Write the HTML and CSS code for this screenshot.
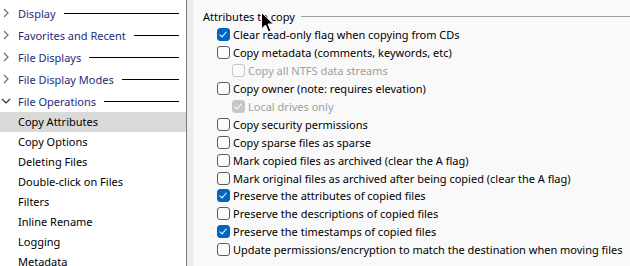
FILE: index.html
```html
<!DOCTYPE html>
<html lang="en">
<head>
  <meta charset="UTF-8">
  <title>Preferences - Copy Attributes</title>
  <link rel="stylesheet" href="styles.css">
</head>
<body>

  <!-- Left tree -->
  <div class="nav">
    <div class="head"><svg class="chev" width="10" height="10" viewBox="0 0 10 10"><path d="M3 1 L7 5 L3 9" /></svg><span class="label">Display</span><span class="rule"></span></div>
    <div class="head"><svg class="chev" width="10" height="10" viewBox="0 0 10 10"><path d="M3 1 L7 5 L3 9" /></svg><span class="label">Favorites and Recent</span><span class="rule"></span></div>
    <div class="head"><svg class="chev" width="10" height="10" viewBox="0 0 10 10"><path d="M3 1 L7 5 L3 9" /></svg><span class="label">File Displays</span><span class="rule"></span></div>
    <div class="head"><svg class="chev" width="10" height="10" viewBox="0 0 10 10"><path d="M3 1 L7 5 L3 9" /></svg><span class="label">File Display Modes</span><span class="rule"></span></div>
    <div class="head"><svg class="chev open" width="10" height="10" viewBox="0 0 10 10"><path d="M1 3 L5 7 L9 3" /></svg><span class="label">File Operations</span><span class="rule"></span></div>
    <div class="item selected">Copy Attributes</div>
    <div class="item">Copy Options</div>
    <div class="item">Deleting Files</div>
    <div class="item">Double-click on Files</div>
    <div class="item">Filters</div>
    <div class="item">Inline Rename</div>
    <div class="item">Logging</div>
    <div class="item">Metadata</div>
  </div>

  <div class="strip"></div>

  <!-- Page -->
  <div class="main">
    <div class="group-title"><span>Attributes to copy</span><span class="rule"></span></div>

    <div class="opts">
      <label class="opt"><span class="box checked"></span>Clear read-only flag when copying from CDs</label>
      <label class="opt"><span class="box"></span>Copy metadata (comments, keywords, etc)</label>
      <label class="opt sub disabled"><span class="box"></span>Copy all NTFS data streams</label>
      <label class="opt"><span class="box"></span>Copy owner (note: requires elevation)</label>
      <label class="opt sub disabled"><span class="box checked"></span>Local drives only</label>
      <label class="opt"><span class="box"></span>Copy security permissions</label>
      <label class="opt"><span class="box"></span>Copy sparse files as sparse</label>
      <label class="opt"><span class="box"></span>Mark copied files as archived (clear the A flag)</label>
      <label class="opt"><span class="box"></span>Mark original files as archived after being copied (clear the A flag)</label>
      <label class="opt"><span class="box checked"></span>Preserve the attributes of copied files</label>
      <label class="opt"><span class="box"></span>Preserve the descriptions of copied files</label>
      <label class="opt"><span class="box checked"></span>Preserve the timestamps of copied files</label>
      <label class="opt"><span class="box"></span>Update permissions/encryption to match the destination when moving files</label>
    </div>

    <!-- mouse pointer -->
    <svg class="cursor" width="14" height="22" viewBox="0 0 14 22">
      <path d="M0.5 0.5 L0.5 17 L4.5 13 L7.5 20 L10 19 L7 12 L12.5 12 Z" fill="#000" stroke="#fff" stroke-width="1"/>
    </svg>
  </div>

</body>
</html>
```

FILE: styles.css
```css
body {
  margin: 0;
  height: 266px;
  overflow: hidden;
  display: flex;
  font-family: "Noto Sans", sans-serif;
  font-size: 11px;
  color: #000;
  background: #f9f9f9;
}

.nav {
  width: 187px;
  flex-shrink: 0;
  background: #fff;
  border-right: 1px solid #7a7a7a;
  padding-top: 2px;
  box-sizing: border-box;
}

.head {
  height: 22px;
  display: flex;
  align-items: center;
  padding-right: 7px;
  color: #1f2a7c;
}

.chev {
  flex-shrink: 0;
  margin-left: 1px;
  margin-right: 7px;
}

.chev path {
  fill: none;
  stroke: #707070;
  stroke-width: 1.2;
}

.chev.open path {
  stroke: #303030;
}

.head .rule {
  flex: 1;
  height: 1px;
  background: #000;
  margin-left: 8px;
}

.item {
  height: 20px;
  line-height: 20px;
  padding-left: 18px;
}

.item.selected {
  background: #d9d9d9;
}

.strip {
  width: 6px;
  flex-shrink: 0;
  background: #ececec;
}

.main {
  flex: 1;
  position: relative;
  padding: 7px 0 0 10px;
}

.group-title {
  display: flex;
  align-items: center;
  height: 18px;
}

.group-title .rule {
  flex: 1;
  height: 1px;
  background: #a0a0a0;
  margin-left: 6px;
}

.opts {
  padding-left: 14px;
  padding-top: 1px;
}

.opt {
  display: flex;
  align-items: center;
  height: 17.9px;
  white-space: nowrap;
}

.opt.sub {
  padding-left: 15px;
}

.opt.disabled {
  color: #a0a0a0;
}

.box {
  width: 13px;
  height: 13px;
  box-sizing: border-box;
  border: 1px solid #5c5c5c;
  border-radius: 3px;
  background: #fbfbfb;
  margin-right: 3px;
  flex-shrink: 0;
  position: relative;
}

.box.checked {
  background: #0067c0;
  border-color: #0067c0;
}

.box.checked::after {
  content: "";
  position: absolute;
  left: 3px;
  top: 1px;
  width: 3px;
  height: 6px;
  border: solid #fff;
  border-width: 0 1px 1px 0;
  transform: rotate(40deg);
}

.disabled .box {
  border-color: #c6c6c6;
}

.disabled .box.checked {
  background: #c6c6c6;
}

.cursor {
  position: absolute;
  left: 68px;
  top: 12px;
}
```
